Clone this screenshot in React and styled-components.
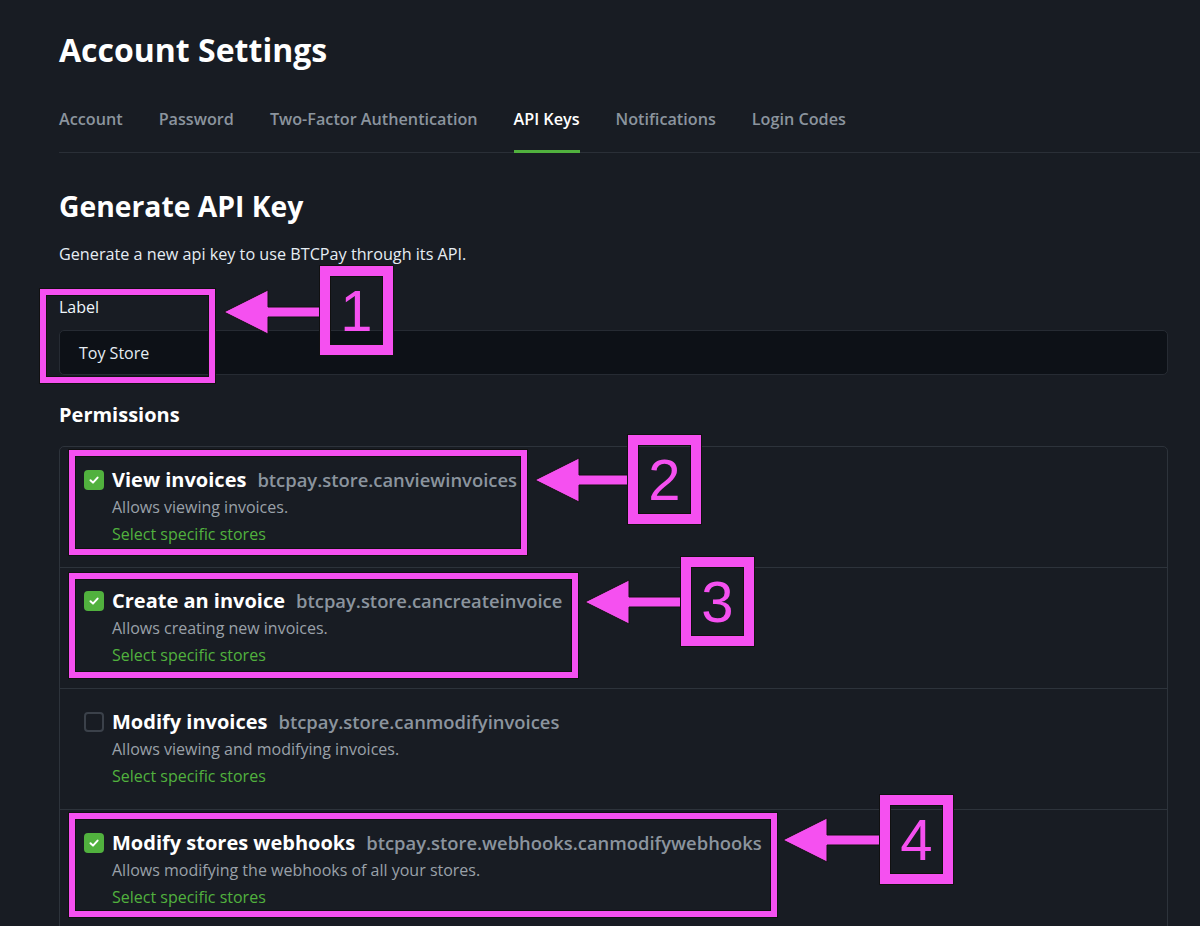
import React from 'react';
import styled, { createGlobalStyle } from 'styled-components';

const GlobalStyle = createGlobalStyle`
  html, body {
    margin: 0;
    padding: 0;
    background: #181c23;
  }
  body {
    font-family: 'Open Sans', 'Noto Sans', sans-serif;
    color: #f0f6fc;
    -webkit-font-smoothing: antialiased;
  }
`;

const MAGENTA = '#f550f0';

const Page = styled.div`
  position: relative;
  width: 1200px;
  height: 926px;
  overflow: hidden;
  box-sizing: border-box;
  padding: 28px 32px 0 59px;
`;

const Title = styled.h1`
  margin: 0;
  font-size: 32px;
  line-height: 44px;
  font-weight: 700;
  color: #fff;
`;

const Tabs = styled.nav`
  display: flex;
  gap: 36px;
  margin: 36px -32px 0 0;
  border-bottom: 1px solid #2a2f37;
`;

const Tab = styled.div`
  font-size: 16.2px;
  font-weight: 600;
  line-height: 22px;
  padding-bottom: 20px;
  margin-bottom: -1px;
  color: ${(p) => (p.active ? '#fff' : '#8b949e')};
  border-bottom: 3px solid ${(p) => (p.active ? '#51b13e' : 'transparent')};
`;

const Heading = styled.h2`
  margin: 34px 0 0;
  font-size: 28.3px;
  line-height: 38px;
  font-weight: 700;
  color: #fff;
`;

const Lead = styled.p`
  margin: 17px 0 0;
  font-size: 16.2px;
  line-height: 24px;
  color: #e6edf3;
`;

const Field = styled.div`
  margin-top: 29px;
`;

const Label = styled.label`
  display: block;
  font-size: 16px;
  line-height: 24px;
  color: #f0f6fc;
`;

const Input = styled.div`
  margin-top: 11px;
  height: 45px;
  box-sizing: border-box;
  display: flex;
  align-items: center;
  padding: 0 19px;
  background: #0d1117;
  border: 1px solid #262b33;
  border-radius: 5px;
  font-size: 16px;
  color: #e6edf3;
`;

const SubHeading = styled.h3`
  margin: 26px 0 0;
  font-size: 20px;
  line-height: 28px;
  font-weight: 700;
  color: #fff;
`;

const List = styled.div`
  margin-top: 17px;
  border: 1px solid #2d333b;
  border-radius: 5px;
`;

const Row = styled.div`
  display: flex;
  gap: 8px;
  height: 120px;
  box-sizing: border-box;
  padding: 21px 24px 0;
  & + & {
    height: 121px;
    border-top: 1px solid #2d333b;
  }
`;

const Box = styled.span`
  flex: none;
  width: 20px;
  height: 20px;
  margin-top: 2px;
  box-sizing: border-box;
  border-radius: 4px;
  display: flex;
  align-items: center;
  justify-content: center;
  background: ${(p) => (p.checked ? '#51b13e' : 'transparent')};
  border: ${(p) => (p.checked ? 'none' : '2px solid #3b414a')};
`;

const Body = styled.div`
  display: flex;
  flex-direction: column;
`;

const PermTitle = styled.div`
  display: flex;
  align-items: baseline;
  gap: 11px;
  line-height: 24px;
`;

const Name = styled.span`
  font-size: 20px;
  font-weight: 700;
  color: #fff;
`;

const Code = styled.span`
  font-size: 18.4px;
  font-weight: 600;
  color: #8b949e;
`;

const Desc = styled.div`
  margin-top: 3px;
  font-size: 16px;
  line-height: 24px;
  color: #9aa1a9;
`;

const StoreLink = styled.a`
  margin-top: 3px;
  font-size: 16px;
  line-height: 24px;
  color: #51b13e;
  text-decoration: none;
`;

/* annotation overlay */
const Frame = styled.div`
  position: absolute;
  box-sizing: border-box;
  border: 6px solid ${MAGENTA};
  outline: 1px solid #111;
  box-shadow: inset 0 0 0 1px #111;
  pointer-events: none;
`;

const Badge = styled.div`
  position: absolute;
  box-sizing: border-box;
  width: 73px;
  height: 89px;
  border: 10px solid ${MAGENTA};
  outline: 1px solid #111;
  box-shadow: inset 0 0 0 1px #111;
  display: flex;
  align-items: center;
  justify-content: center;
  font-family: 'Liberation Sans', Arial, sans-serif;
  font-size: 58px;
  line-height: 1;
  color: ${MAGENTA};
`;

const Arrow = ({ x, y, len }) => (
  <svg
    width={len + 4}
    height={48}
    viewBox={`0 0 ${len + 4} 48`}
    style={{ position: 'absolute', left: x - 2, top: y - 24 }}
  >
    <path
      d={`M2 24 L46 2 L46 19 L${len + 2} 19 L${len + 2} 29 L46 29 L46 46 Z`}
      fill={MAGENTA}
      stroke="#111"
      strokeWidth="1"
    />
  </svg>
);

const Check = () => (
  <svg width="12" height="12" viewBox="0 0 12 12">
    <path d="M2.5 6.2 L5 8.6 L9.6 3.6" fill="none" stroke="#fff" strokeWidth="2" strokeLinecap="round" strokeLinejoin="round" />
  </svg>
);

const perms = [
  { name: 'View invoices', code: 'btcpay.store.canviewinvoices', desc: 'Allows viewing invoices.', checked: true },
  { name: 'Create an invoice', code: 'btcpay.store.cancreateinvoice', desc: 'Allows creating new invoices.', checked: true },
  { name: 'Modify invoices', code: 'btcpay.store.canmodifyinvoices', desc: 'Allows viewing and modifying invoices.', checked: false },
  { name: 'Modify stores webhooks', code: 'btcpay.store.webhooks.canmodifywebhooks', desc: 'Allows modifying the webhooks of all your stores.', checked: true },
];

const tabs = ['Account', 'Password', 'Two-Factor Authentication', 'API Keys', 'Notifications', 'Login Codes'];

const callouts = [
  { frame: [40, 289, 175, 94], arrow: [224, 312, 100], badge: [320, 266, '1'] },
  { frame: [69, 450, 458, 105], arrow: [535, 480, 95], badge: [628, 435, '2'] },
  { frame: [69, 573, 509, 105], arrow: [585, 602, 99], badge: [681, 557, '3'] },
  { frame: [69, 813, 708, 104], arrow: [783, 840, 99], badge: [880, 795, '4'] },
];

export default function App() {
  return (
    <>
      <GlobalStyle />
      <Page>
        <Title>Account Settings</Title>
        <Tabs>
          {tabs.map((t) => (
            <Tab key={t} active={t === 'API Keys'}>{t}</Tab>
          ))}
        </Tabs>
        <Heading>Generate API Key</Heading>
        <Lead>Generate a new api key to use BTCPay through its API.</Lead>
        <Field>
          <Label>Label</Label>
          <Input>Toy Store</Input>
        </Field>
        <SubHeading>Permissions</SubHeading>
        <List>
          {perms.map((p) => (
            <Row key={p.code}>
              <Box checked={p.checked}>{p.checked && <Check />}</Box>
              <Body>
                <PermTitle>
                  <Name>{p.name}</Name>
                  <Code>{p.code}</Code>
                </PermTitle>
                <Desc>{p.desc}</Desc>
                <StoreLink href="#">Select specific stores</StoreLink>
              </Body>
            </Row>
          ))}
        </List>

        {callouts.map((c) => (
          <React.Fragment key={c.badge[2]}>
            <Frame style={{ left: c.frame[0], top: c.frame[1], width: c.frame[2], height: c.frame[3] }} />
            <Arrow x={c.arrow[0]} y={c.arrow[1]} len={c.arrow[2]} />
            <Badge style={{ left: c.badge[0], top: c.badge[1] }}>{c.badge[2]}</Badge>
          </React.Fragment>
        ))}
      </Page>
    </>
  );
}
